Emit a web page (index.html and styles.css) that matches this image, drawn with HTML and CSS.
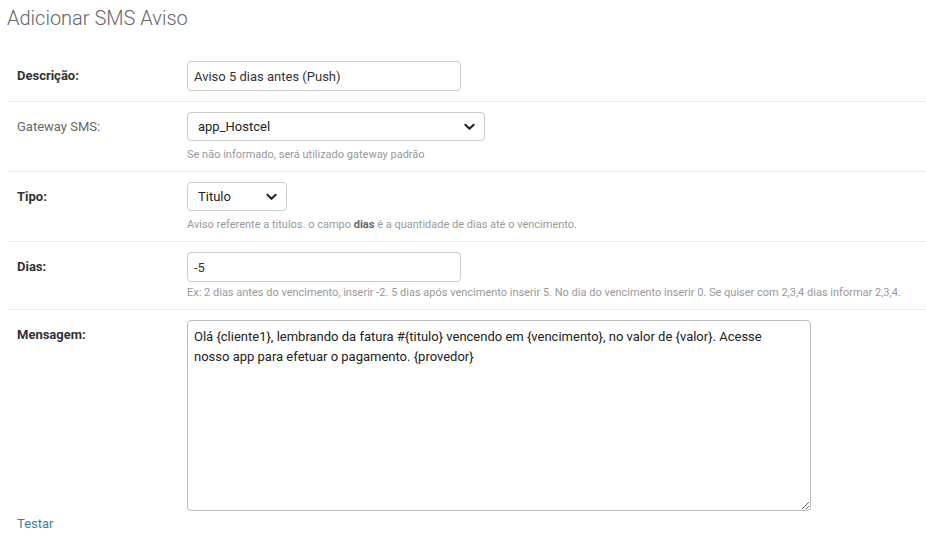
FILE: index.html
```html
<!DOCTYPE html>
<html lang="pt-BR">
<head>
  <meta charset="UTF-8">
  <meta name="viewport" content="width=device-width, initial-scale=1.0">
  <title>Adicionar SMS Aviso</title>
  <link rel="stylesheet" href="styles.css">
</head>
<body>
  <div class="content">
    <h1 class="page-title">Adicionar SMS Aviso</h1>

    <form class="aviso-form">
      <fieldset class="module">
        <div class="form-row">
          <label class="required" for="descricao">Descrição:</label>
          <div class="field">
            <input type="text" id="descricao" class="vTextField" value="Aviso 5 dias antes (Push)">
          </div>
        </div>

        <div class="form-row">
          <label for="gateway">Gateway SMS:</label>
          <div class="field">
            <span class="select-wrap wide">
              <select id="gateway">
                <option>app_Hostcel</option>
              </select>
              <svg class="chevron" viewBox="0 0 12 8" width="11" height="8"><path d="M1.5 1.5 6 6l4.5-4.5" fill="none" stroke="#222" stroke-width="2.2" stroke-linecap="round" stroke-linejoin="round"/></svg>
            </span>
            <div class="help">Se não informado, será utilizado gateway padrão</div>
          </div>
        </div>

        <div class="form-row">
          <label class="required" for="tipo">Tipo:</label>
          <div class="field">
            <span class="select-wrap small">
              <select id="tipo">
                <option>Titulo</option>
              </select>
              <svg class="chevron" viewBox="0 0 12 8" width="11" height="8"><path d="M1.5 1.5 6 6l4.5-4.5" fill="none" stroke="#222" stroke-width="2.2" stroke-linecap="round" stroke-linejoin="round"/></svg>
            </span>
            <div class="help">Aviso referente a titulos. o campo <b>dias</b> é a quantidade de dias até o vencimento.</div>
          </div>
        </div>

        <div class="form-row">
          <label class="required" for="dias">Dias:</label>
          <div class="field">
            <input type="text" id="dias" class="vTextField" value="-5">
            <div class="help tight">Ex: 2 dias antes do vencimento, inserir -2. 5 dias após vencimento inserir 5. No dia do vencimento inserir 0. Se quiser com 2,3,4 dias informar 2,3,4.</div>
          </div>
        </div>

        <div class="form-row last">
          <label class="required" for="mensagem">Mensagem:</label>
          <div class="field">
            <textarea id="mensagem" class="vLargeTextField">Olá {cliente1}, lembrando da fatura #{titulo} vencendo em {vencimento}, no valor de {valor}. Acesse nosso app para efetuar o pagamento. {provedor}</textarea>
          </div>
        </div>
      </fieldset>

      <a class="test-link" href="#">Testar</a>
    </form>
  </div>
</body>
</html>
```

FILE: styles.css
```css
* {
  box-sizing: border-box;
}

body {
  margin: 0;
  font-family: Roboto, "Liberation Sans", Arial, sans-serif;
  font-size: 13px;
  color: #333;
  background: #fff;
}

.content {
  padding: 0 0 0 7px;
}

.page-title {
  margin: 0;
  padding: 6px 0 0 0;
  font-size: 20px;
  font-weight: 300;
  color: #666;
  height: 51px;
}

.module {
  margin: 0;
  padding: 0;
  border: none;
}

.form-row {
  display: flex;
  padding: 10px;
  border-bottom: 1px solid #eee;
}

.form-row.last {
  border-bottom: none;
  padding-bottom: 0;
}

.form-row label {
  width: 170px;
  flex-shrink: 0;
  padding-top: 8px;
  color: #666;
  line-height: 13px;
}

.form-row label.required {
  color: #333;
  font-weight: bold;
}

.field {
  display: flex;
  flex-direction: column;
  align-items: flex-start;
}

input.vTextField,
select,
textarea {
  font-family: Roboto, "Liberation Sans", Arial, sans-serif;
  font-size: 13px;
  color: #333;
  border: 1px solid #ccc;
  border-radius: 4px;
  background: #fff;
}

input.vTextField {
  width: 274px;
  height: 30px;
  padding: 5px 6px;
}

.select-wrap {
  position: relative;
  display: inline-block;
}

.select-wrap select {
  appearance: none;
  -webkit-appearance: none;
  height: 29px;
  padding: 4px 10px;
  display: block;
  color: #222;
}

.select-wrap.wide select {
  width: 298px;
}

.select-wrap.small select {
  width: 100px;
}

.chevron {
  position: absolute;
  right: 10px;
  top: 11px;
  pointer-events: none;
}

.help {
  margin-top: 7px;
  font-size: 11px;
  color: #999;
  line-height: 13px;
  white-space: nowrap;
}

.help.tight {
  margin-top: 4px;
}

.help b {
  color: #666;
  font-weight: bold;
}

textarea.vLargeTextField {
  width: 624px;
  height: 191px;
  padding: 6px 20px 5px 6px;
  line-height: 20px;
  resize: both;
  color: #222;
  border-color: #bbb;
}

.test-link {
  display: inline-block;
  margin: 5px 0 0 10px;
  color: #447e9b;
  text-decoration: none;
  font-size: 13px;
}
```
